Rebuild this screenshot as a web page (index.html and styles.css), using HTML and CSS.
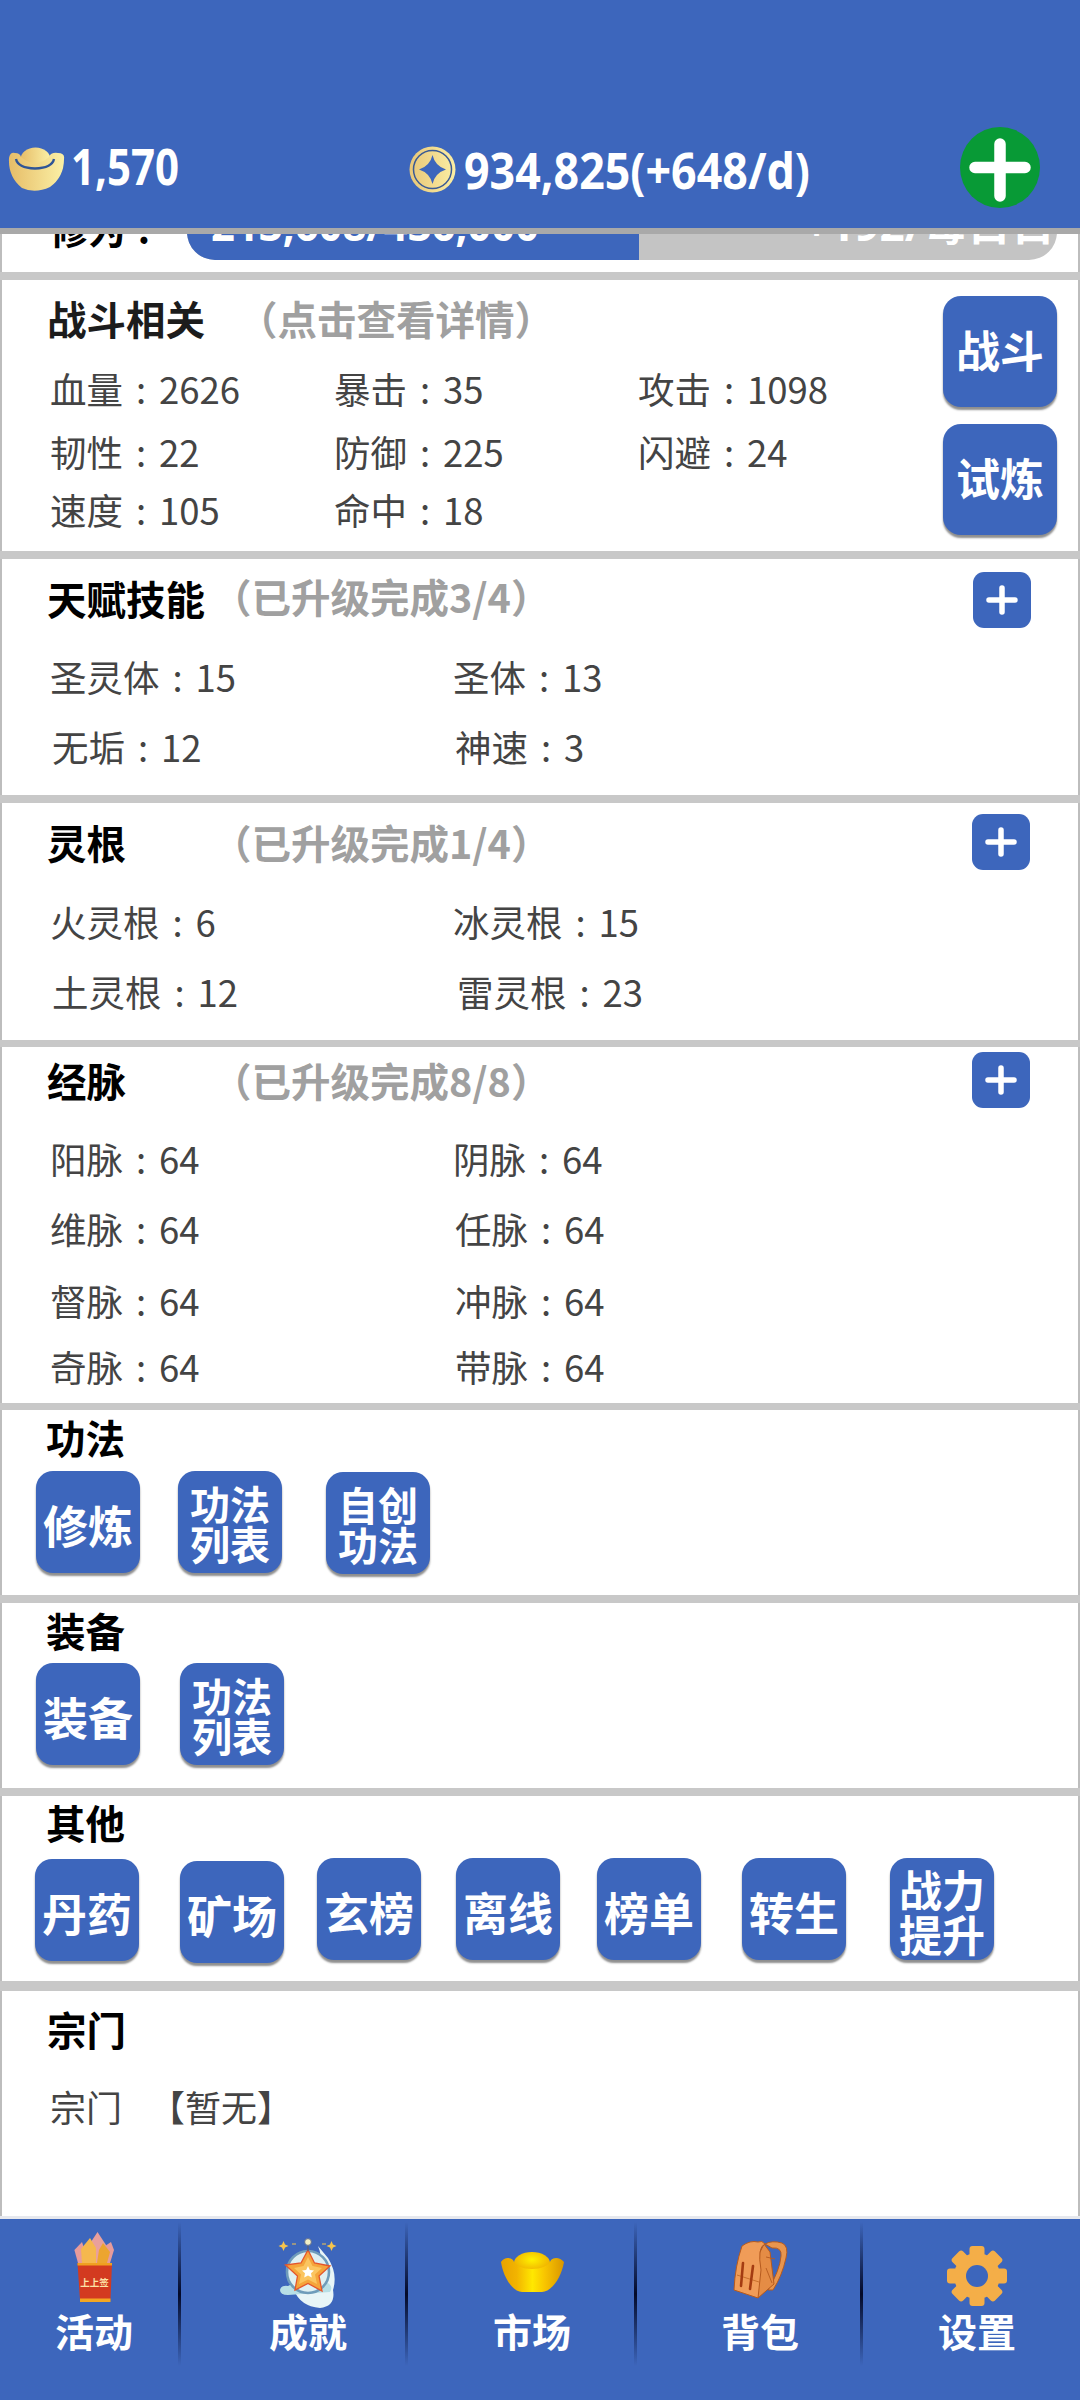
FILE: index.html
```html
<!DOCTYPE html>
<html lang="zh-CN">
<head>
<meta charset="utf-8">
<title>角色</title>
<link rel="stylesheet" href="styles.css">
</head>
<body>
<div class="page">
  <header class="topbar">
    <div class="res res-gold">
      <svg class="ico-gold" viewBox="0 0 57 45" width="57" height="45">
        <defs><linearGradient id="g1" x1="0" x2="1" y1="0" y2="0"><stop offset="0" stop-color="#e6bd68"/><stop offset="1" stop-color="#fbf0a6"/></linearGradient></defs>
        <ellipse cx="27.5" cy="12.5" rx="15" ry="12" fill="url(#g1)"/>
        <path d="M1,11 Q2,5 7,6 Q12,6 13,10 Q27,22 41,10 Q43,5 50,6 Q57,6 56,12 Q56,30 42,40 Q27,47 14,41 Q0,30 1,11Z" fill="url(#g1)"/>
        <path d="M8,12 Q10,21 27,21.5 Q44,21 46,12" fill="none" stroke="#2f5596" stroke-width="2.4"/>
      </svg>
      <span class="res-val res-val-gold">1,570</span>
    </div>
    <div class="res res-coin">
      <svg class="ico-coin" viewBox="0 0 47 47" width="47" height="47">
        <defs><linearGradient id="g2" x1="0" x2="1" y1="0" y2="0"><stop offset="0" stop-color="#e8c778"/><stop offset="1" stop-color="#fbeea4"/></linearGradient></defs>
        <circle cx="23.5" cy="23.5" r="23" fill="url(#g2)"/>
        <circle cx="23.5" cy="23.5" r="19" fill="none" stroke="#3a5a94" stroke-width="1.5"/>
        <path d="M23.5,9 Q26,20 37,23.5 Q26,27 23.5,38 Q21,27 10,23.5 Q21,20 23.5,9Z" fill="#3d66bc"/>
      </svg>
      <span class="res-val res-val-coin">934,825(+648/d)</span>
    </div>
    <svg class="ico-add" viewBox="0 0 80 81" width="80" height="81">
      <ellipse cx="40" cy="40.5" rx="40" ry="40.5" fill="#089a36"/>
      <path d="M40,17 V69 M15,40.5 H65" stroke="#fff" stroke-width="11.5" stroke-linecap="round" fill="none"/>
    </svg>
  </header>

  <main class="list">
    <div class="sliver">
      <span class="sliver-label">修为<span class="colon">:</span></span>
      <div class="bar">
        <div class="bar-fill" style="width:52%"></div>
        <span class="bar-num">213,608/436,000</span>
        <span class="bar-rate">+192/每日日</span>
      </div>
    </div>

    <section class="sec sec-battle">
      <div class="battle-main">
        <div class="head-plain">
          <h2 class="title title-battle">战斗相关</h2>
          <span class="sub">（点击查看详情）</span>
        </div>
        <div class="stats stats-battle">
          <div>血量<span class="colon">:</span>2626</div>
          <div>暴击<span class="colon">:</span>35</div>
          <div>攻击<span class="colon">:</span>1098</div>
          <div>韧性<span class="colon">:</span>22</div>
          <div>防御<span class="colon">:</span>225</div>
          <div>闪避<span class="colon">:</span>24</div>
          <div>速度<span class="colon">:</span>105</div>
          <div>命中<span class="colon">:</span>18</div>
        </div>
      </div>
      <div class="battle-side">
        <button class="btn btn-side">战斗</button>
        <button class="btn btn-side">试炼</button>
      </div>
    </section>

    <section class="sec sec-talent">
      <div class="head head-talent">
        <h2 class="title title-up">天赋技能</h2>
        <span class="sub sub-up">（已升级完成3/4）</span>
        <button class="plus" aria-label="升级"><svg viewBox="0 0 58 56" width="58" height="56"><path d="M29,16 V40 M16,28 H42" stroke="#fff" stroke-width="5.5" stroke-linecap="round"/></svg></button>
      </div>
      <div class="stats stats-two stats-talent">
        <div>圣灵体<span class="colon">:</span>15</div>
        <div>圣体<span class="colon">:</span>13</div>
        <div class="nudge">无垢<span class="colon">:</span>12</div>
        <div class="nudge">神速<span class="colon">:</span>3</div>
      </div>
    </section>

    <section class="sec sec-root">
      <div class="head head-root">
        <h2 class="title">灵根</h2>
        <span class="sub">（已升级完成1/4）</span>
        <button class="plus plus-left" aria-label="升级"><svg viewBox="0 0 58 56" width="58" height="56"><path d="M29,16 V40 M16,28 H42" stroke="#fff" stroke-width="5.5" stroke-linecap="round"/></svg></button>
      </div>
      <div class="stats stats-two stats-root">
        <div>火灵根<span class="colon">:</span>6</div>
        <div>冰灵根<span class="colon">:</span>15</div>
        <div class="nudge">土灵根<span class="colon">:</span>12</div>
        <div class="nudge-more">雷灵根<span class="colon">:</span>23</div>
      </div>
    </section>

    <section class="sec sec-meridian">
      <div class="head head-meridian">
        <h2 class="title">经脉</h2>
        <span class="sub">（已升级完成8/8）</span>
        <button class="plus plus-left" aria-label="升级"><svg viewBox="0 0 58 56" width="58" height="56"><path d="M29,16 V40 M16,28 H42" stroke="#fff" stroke-width="5.5" stroke-linecap="round"/></svg></button>
      </div>
      <div class="stats stats-two stats-meridian">
        <div>阳脉<span class="colon">:</span>64</div>
        <div>阴脉<span class="colon">:</span>64</div>
        <div>维脉<span class="colon">:</span>64</div>
        <div class="nudge">任脉<span class="colon">:</span>64</div>
        <div>督脉<span class="colon">:</span>64</div>
        <div class="nudge">冲脉<span class="colon">:</span>64</div>
        <div>奇脉<span class="colon">:</span>64</div>
        <div class="nudge">带脉<span class="colon">:</span>64</div>
      </div>
    </section>

    <section class="sec sec-tools sec-gong">
      <h2 class="title">功法</h2>
      <div class="btns btns-gong">
        <button class="btn btn-big">修炼</button>
        <button class="btn btn-two">功法<br>列表</button>
        <button class="btn btn-two down1">自创<br>功法</button>
      </div>
    </section>

    <section class="sec sec-tools sec-equip">
      <h2 class="title">装备</h2>
      <div class="btns btns-equip">
        <button class="btn btn-big">装备</button>
        <button class="btn btn-two">功法<br>列表</button>
      </div>
    </section>

    <section class="sec sec-tools sec-other">
      <h2 class="title">其他</h2>
      <div class="btns btns-other">
        <button class="btn btn-big down1">丹药</button>
        <button class="btn btn-big down3">矿场</button>
        <button class="btn btn-big">玄榜</button>
        <button class="btn btn-big">离线</button>
        <button class="btn btn-big">榜单</button>
        <button class="btn btn-big">转生</button>
        <button class="btn btn-tall">战力<br>提升</button>
      </div>
    </section>

    <section class="sec sec-sect">
      <h2 class="title">宗门</h2>
      <div class="sect-line"><span>宗门</span><span class="sect-val">【暂无】</span></div>
    </section>
  </main>

  <nav class="tabs">
    <a class="tab tab-1">
      <svg viewBox="0 0 80 80" width="80" height="80">
        <path d="M20.4,20 L28,12 L35,33 L24,33Z" fill="#e79b9b"/>
        <path d="M35,15 L43.5,2 L52,15 L50,33 L36,33Z" fill="#e9a09c"/>
        <path d="M48,18 L57,12 L60,20 L56,33 L48,33Z" fill="#e79b9b"/>
        <path d="M28,33 L27,19 L36,8 L42,18 L42,33Z" fill="#f5b84e"/>
        <path d="M43,33 L45,20 L49,13 L56,22 L53,33Z" fill="#eca52f"/>
        <path d="M23.5,33 H58 L56.5,70 H26Z" fill="#d33a20"/>
        <rect x="23.5" y="33" width="34.5" height="2.5" fill="#f0a020"/>
        <rect x="26" y="68.5" width="30.5" height="3.5" fill="#f3a722"/>
        <text x="40.5" y="56" class="ico-text">上上签</text>
      </svg>
      <span class="tab-label">活动</span>
    </a>
    <a class="tab tab-2">
      <svg viewBox="0 0 80 80" width="80" height="80">
        <path d="M26,60 Q32,76 52,78 Q68,76 65,60 Q70,44 60,28 L50,16 Q56,30 52,60Z" fill="#e8f5f7"/>
        <path d="M12,60 Q13,55 20,56 L28,52 L58,52 Q66,56 62,62 L48,63 L20,65 Q12,65 12,60Z" fill="#b8dfe6"/>
        <circle cx="40" cy="42" r="21" fill="#dff0f2" stroke="#6f9cba" stroke-width="2.6"/>
        <polygon points="40,20 46.5,33 62,36 51,46 54,61 40,53.5 27,60 29.5,46 17.5,35 33,33" fill="#f5a53b" stroke="#e4562c" stroke-width="1.3"/>
        <polygon points="40,27 44.5,36 54,38 47,44.5 49,54 40,49.5 31,54 33,44.5 26,38 35.5,36" fill="#fbc560"/>
        <polygon points="40,36 41.8,40 46,40.5 43,43.3 43.8,47.5 40,45.4 36.2,47.5 37,43.3 34,40.5 38.2,40" fill="#fff"/>
        <path d="M40,15 V21" stroke="#555f80" stroke-width="1.4"/>
        <circle cx="40" cy="12" r="3.4" fill="#f3efc6" stroke="#5a6a90" stroke-width="1"/>
        <path d="M15.5,11 L17,14.5 L20.5,16 L17,17.5 L15.5,21 L14,17.5 L10.5,16 L14,14.5Z" fill="#f6c44c"/>
        <path d="M63.5,11 L65,14.5 L68.5,16 L65,17.5 L63.5,21 L62,17.5 L58.5,16 L62,14.5Z" fill="#f6c44c"/>
        <path d="M54,14 h4 M24,14 h4" stroke="#f6c44c" stroke-width="1.2"/>
      </svg>
      <span class="tab-label">成就</span>
    </a>
    <a class="tab tab-3">
      <svg viewBox="0 0 80 80" width="80" height="80">
        <defs>
          <linearGradient id="g3" x1="0" x2="1" y1="0" y2="0"><stop offset="0" stop-color="#e8a200"/><stop offset="0.25" stop-color="#f2b400"/><stop offset="0.5" stop-color="#ffe800"/><stop offset="0.7" stop-color="#f8c400"/><stop offset="1" stop-color="#d99600"/></linearGradient>
          <radialGradient id="g4" cx="0.5" cy="0.35" r="0.6"><stop offset="0" stop-color="#fff200"/><stop offset="1" stop-color="#eea800"/></radialGradient>
        </defs>
        <ellipse cx="40" cy="33" rx="18" ry="11" fill="url(#g4)"/>
        <path d="M9,32 C12,50 22,62 30,62 L50,62 C58,62 69,50 72,32 C68,27 62,27 59,30 C55,42 25,42 21,30 C18,27 12,27 9,32Z" fill="url(#g3)"/>
      </svg>
      <span class="tab-label">市场</span>
    </a>
    <a class="tab tab-4">
      <svg viewBox="0 0 80 80" width="80" height="80">
        <path d="M45,14 Q52,10 62,13 Q69,16 66,28 Q62,46 53,60 L48,60 Q60,40 61,26 Q62,17 52,18Z" fill="#e8954e" stroke="#b55a1e" stroke-width="1"/>
        <path d="M44,14 L50,22 L54,54 L38,68 L36,30Z" fill="#e58c45" stroke="#b55a1e" stroke-width="1"/>
        <path d="M22,16 Q30,10 38,12 Q42,10 45,14 Q37,17 41,40 L38,68 L14,60 Q15,36 22,16Z" fill="#f09c58" stroke="#b55a1e" stroke-width="1"/>
        <path d="M17,45 L39,52" stroke="#c9702c" stroke-width="1"/>
        <path d="M23,33 L21,56 M33,36 L30,59" stroke="#a43c12" stroke-width="2.6" stroke-linecap="round"/>
        <path d="M46,27 L55,29 M46,38 L52,53" stroke="#b55a1e" stroke-width="0.9"/>
      </svg>
      <span class="tab-label">背包</span>
    </a>
    <a class="tab tab-5">
      <svg viewBox="0 0 80 80" width="80" height="80">
        <g fill="#f4ae48" transform="translate(40 46)">
          <circle r="23"/>
          <rect x="-7.5" y="-30" width="15" height="14" rx="3"/>
          <rect x="-7.5" y="-30" width="15" height="14" rx="3" transform="rotate(45)"/>
          <rect x="-7.5" y="-30" width="15" height="14" rx="3" transform="rotate(90)"/>
          <rect x="-7.5" y="-30" width="15" height="14" rx="3" transform="rotate(135)"/>
          <rect x="-7.5" y="-30" width="15" height="14" rx="3" transform="rotate(180)"/>
          <rect x="-7.5" y="-30" width="15" height="14" rx="3" transform="rotate(225)"/>
          <rect x="-7.5" y="-30" width="15" height="14" rx="3" transform="rotate(270)"/>
          <rect x="-7.5" y="-30" width="15" height="14" rx="3" transform="rotate(315)"/>
          <circle r="11" fill="#3d66bc"/>
        </g>
      </svg>
      <span class="tab-label">设置</span>
    </a>
  </nav>
</div>
</body>
</html>
```

FILE: styles.css
```css
* { box-sizing: border-box; }
html, body { margin: 0; padding: 0; }
body {
  font-family: "Noto Sans CJK SC", "Noto Sans", sans-serif;
  background: #c8c8c8;
}
.page {
  width: 1080px;
  height: 2400px;
  display: flex;
  flex-direction: column;
  overflow: hidden;
}

/* top bar */
.topbar {
  height: 234px;
  flex: none;
  background: #3d66bc;
  border-bottom: 6px solid #a9a9a9;
  display: flex;
  align-items: flex-start;
  padding: 127px 0 0 8px;
}
.res { display: flex; align-items: flex-start; flex: none; }
.res-gold { width: 401px; padding-top: 20px; }
.res-coin { width: 551px; padding-top: 19px; }
.ico-gold, .ico-coin { flex: none; display: block; }
.res-val {
  display: block;
  color: #fff;
  font-family: "Noto Sans", sans-serif;
  font-weight: 700;
  font-size: 50px;
  line-height: 50px;
  white-space: nowrap;
  transform-origin: left center;
}
.res-val-gold { margin: -6px 0 0 6px; transform: scaleX(.84); }
.res-val-coin { margin: -1px 0 0 8px; transform: scaleX(.895); }
.ico-add { flex: none; display: block; }

/* list */
.list {
  flex: 1;
  min-height: 0;
  overflow: hidden;
  background: #c8c8c8;
}
.sliver {
  height: 38px;
  background: #fff;
  border-left: 2px solid #bdbdbd;
  border-right: 2px solid #bdbdbd;
  display: flex;
  align-items: flex-end;
  padding: 0 21px 12px 48px;
  overflow: hidden;
}
.sliver-label {
  flex: none;
  width: 137px;
  font-size: 38px;
  line-height: 40px;
  font-weight: 700;
  color: #000;
  margin-bottom: 12px;
  white-space: nowrap;
}
.bar {
  position: relative;
  flex: 1;
  height: 60px;
  background: #c4c4c4;
  border-radius: 0 0 28px 28px;
  overflow: hidden;
  display: flex;
  justify-content: space-between;
  align-items: flex-end;
  padding: 0 2px 0 24px;
  color: #fff;
  font-family: "Noto Sans", "Noto Sans CJK SC", sans-serif;
  font-size: 44px;
  line-height: 50px;
  font-weight: 700;
}
.bar-fill {
  position: absolute;
  left: 0;
  top: 0;
  bottom: 0;
  background: #3d66bc;
}
.bar-num, .bar-rate {
  position: relative;
  display: block;
  white-space: nowrap;
  margin-bottom: 11px;
}
.bar-num { transform: scaleX(.95); transform-origin: left center; }
.bar-rate { font-size: 44px; transform-origin: right center; }

.sec {
  background: #fff;
  margin-top: 8px;
  border-left: 2px solid #bdbdbd;
  border-right: 2px solid #bdbdbd;
  padding-left: 45px;
  overflow: hidden;
}
.sec-battle { height: 271px; display: flex; padding-top: 18px; }
.sec-talent { height: 236px; }
.sec-root { height: 237px; }
.sec-meridian { height: 356px; margin-top: 7px; }
.sec-gong { height: 185px; margin-top: 7px; }
.sec-equip { height: 185px; }
.sec-other { height: 185px; }
.sec-sect { height: 225px; margin-top: 10px; padding-top: 18px; }

.title {
  margin: 0;
  font-size: 39.5px;
  line-height: 40px;
  font-weight: 700;
  color: #000;
  flex: none;
}
.title-battle { width: 191px; color: #1c1c1c; }
.sub {
  font-size: 39.5px;
  line-height: 40px;
  font-weight: 700;
  color: #a0a0a0;
  white-space: nowrap;
}
.sub-up { margin-bottom: 8px; }
.title-up { margin-bottom: 4px; }

.head-plain { display: flex; }
.head { display: flex; align-items: center; }
.head .title { width: 165px; }
.head-talent { padding-top: 13px; }
.head-root { padding-top: 11px; }
.head-meridian { padding-top: 5px; }
.plus {
  margin: 0 47px 0 auto;
  padding: 0;
  border: 0;
  width: 58px;
  height: 56px;
  background: #3d66bc;
  border-radius: 11px;
  display: block;
  flex: none;
}
.plus svg { display: block; }
.plus-left { margin-right: 48px; }

/* stat rows */
.stats {
  display: grid;
  padding-left: 3px;
  font-size: 36.5px;
  color: #444;
  align-items: center;
  white-space: nowrap;
}
.stats div { line-height: 50px; }
.colon {
  display: inline-block;
  width: 36px;
  text-align: center;
}
.stats-battle {
  margin-top: 19.5px;
  grid-template-columns: 284px 304px 1fr;
  grid-template-rows: 63px 63px 53px;
}
.stats-two { grid-template-columns: 403px 1fr; }
.stats-talent { margin-top: 14px; grid-auto-rows: 70px; }
.stats-root { margin-top: 17px; grid-auto-rows: 70px; }
.stats-meridian { margin-top: 16px; grid-template-rows: 70px 70px 74px 58px; }
.nudge { margin-left: 2px; }
.nudge-more { margin-left: 4px; }

.battle-main { flex: 1; min-width: 0; }
.battle-side {
  flex: none;
  display: flex;
  flex-direction: column;
  gap: 17px;
  margin: -2px 21px 0 0;
}

/* buttons */
.btn {
  padding: 0;
  border: 0;
  background: #3d66bc;
  color: #fff;
  font-family: "Noto Sans CJK SC", sans-serif;
  font-weight: 700;
  box-shadow: 0 3px 2px #8f8f8f;
  display: block;
}
.btn-side {
  width: 114px;
  height: 111px;
  border-radius: 18px;
  font-size: 44px;
  line-height: 46px;
  padding-bottom: 5px;
}
.btn-big {
  width: 104px;
  height: 102px;
  border-radius: 17px;
  font-size: 45px;
  line-height: 46px;
  padding-top: 6px;
}
.btn-two {
  width: 104px;
  height: 102px;
  border-radius: 17px;
  font-size: 40px;
  line-height: 40px;
  padding-top: 1px;
}
.btn-tall {
  width: 104px;
  height: 102px;
  border-radius: 17px;
  font-size: 43px;
  line-height: 45px;
  padding-top: 3px;
}
.down1 { margin-top: 1px; }
.down3 { margin-top: 3px; }

.sec-tools { padding-left: 0; }
.sec-tools .title { margin-left: 44px; }
.sec-gong, .sec-equip { padding-top: 7px; }
.sec-other { padding-top: 6px; }
.btns { display: grid; align-items: start; }
.btns-gong { margin: 14px 0 0 34px; grid-template-columns: 142px 148px 104px; }
.btns-equip { margin: 13px 0 0 34px; grid-template-columns: 144px 104px; }
.btns-other { margin: 16px 0 0 33px; grid-template-columns: 145px 137px 139px 141px 145px 148px 104px; }

.sect-line {
  margin-top: 32px;
  padding-left: 3px;
  font-size: 36px;
  line-height: 50px;
  color: #444;
  display: flex;
}
.sect-val { margin-left: 27px; }

/* tab bar */
.tabs {
  flex: none;
  height: 184px;
  background: #3d66bc;
  border-top: 3px solid #e6e8ee;
  display: grid;
  grid-template-columns: 178px 227px 229px 226px 220px;
  align-content: start;
  padding-top: 3px;
}
.tab {
  display: flex;
  flex-direction: column;
  align-items: center;
  height: 144px;
  padding-top: 8px;
}
.tab svg { display: block; flex: none; }
.tab + .tab { background: linear-gradient(to bottom, rgba(3,9,40,0), #030928 50%, rgba(3,9,40,0)) no-repeat left top / 3px 100%; }
.tab-1 { padding-left: 10px; }
.tab-2 { padding-left: 33px; }
.tab-3 { padding-left: 25px; }
.tab-4 { padding-left: 26px; }
.tab-5 { padding-left: 14px; }
.tab-label {
  color: #fff;
  font-size: 39px;
  line-height: 44px;
  font-weight: 700;
  margin-top: -2px;
}
.ico-text {
  font-size: 9.5px;
  font-weight: 700;
  fill: #fce2a6;
  text-anchor: middle;
}
```
